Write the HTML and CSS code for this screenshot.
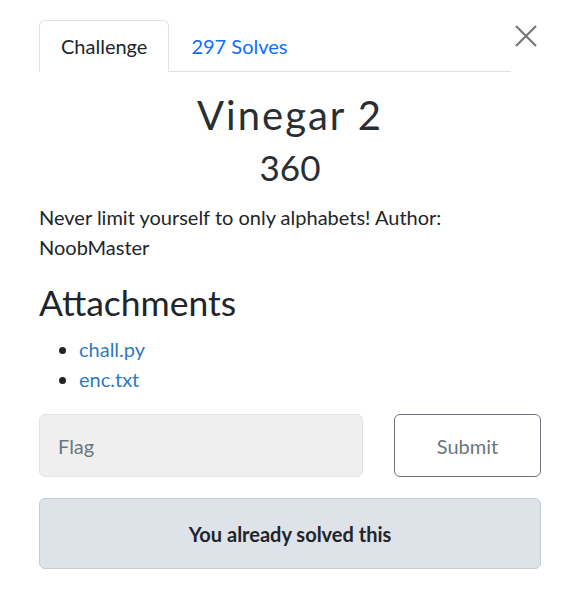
FILE: index.html
```html
<!DOCTYPE html>
<html>
<head>
<meta charset="utf-8">
<link rel="stylesheet" href="styles.css">
</head>
<body>
<div class="modal">
  <div class="header">
    <ul class="tabs">
      <li class="tab active">Challenge</li>
      <li class="tab link">297 Solves</li>
    </ul>
    <button class="close" aria-label="Close">
      <svg width="22" height="22" viewBox="0 0 22 22"><path d="M1 1L21 21M21 1L1 21" stroke="#777" stroke-width="2.2" fill="none"/></svg>
    </button>
  </div>
  <h2 class="title">Vinegar 2</h2>
  <h3 class="value">360</h3>
  <p class="desc">Never limit yourself to only alphabets! Author: NoobMaster</p>
  <h4 class="att">Attachments</h4>
  <ul class="files">
    <li><a href="#">chall.py</a></li>
    <li><a href="#">enc.txt</a></li>
  </ul>
  <div class="form">
    <div class="input">Flag</div>
    <button class="submit">Submit</button>
  </div>
  <div class="alert">You already solved this</div>
</div>
</body>
</html>
```
FILE: styles.css
```css
* { box-sizing: border-box; }
body {
  margin: 0;
  background: #fff;
  font-family: Lato, "Open Sans", sans-serif;
  color: #212529;
}
.modal {
  width: 502px;
  margin-left: 39px;
  padding-top: 20px;
}
.header {
  display: flex;
  align-items: flex-start;
}
.tabs {
  flex: 1;
  display: flex;
  list-style: none;
  margin: 0;
  padding: 0;
  border-bottom: 1px solid #dee2e6;
  height: 52px;
}
.tab {
  padding: 0 21px;
  font-size: 20px;
  line-height: 51px;
  border: 1px solid transparent;
  border-top-left-radius: 6px;
  border-top-right-radius: 6px;
  margin-bottom: -1px;
}
.tab.active {
  border-color: #dee2e6 #dee2e6 #fff;
  background: #fff;
  color: #212529;
}
.tab.link { color: #0d6efd; }
.close {
  border: 0;
  background: none;
  padding: 0;
  margin: 5px 4px 0 4px;
  width: 22px;
  height: 22px;
  display: flex;
}
.title {
  margin: 19px 0 0;
  text-align: center;
  font-size: 40px;
  font-weight: 400;
  letter-spacing: 2px;
  line-height: 48px;
  color: #2a2e33;
}
.value {
  margin: 7px 0 0;
  text-align: center;
  font-size: 35px;
  font-weight: 400;
  line-height: 42px;
  color: #2a2e33;
}
.desc {
  margin: 14px 0 0;
  font-size: 20px;
  line-height: 30px;
}
.att {
  margin: 19px 0 0;
  font-size: 35.5px;
  font-weight: 400;
  line-height: 43px;
}
.files {
  margin: 10px 0 0;
  padding-left: 40px;
  font-size: 20px;
  line-height: 30px;
}
.files a { color: #2f7abf; text-decoration: none; }
.form {
  display: flex;
  gap: 31px;
  margin-top: 20px;
}
.input {
  flex: 1;
  height: 63px;
  background: #efefef;
  border: 1px solid #e3e3e3;
  border-radius: 6px;
  padding: 0 18px;
  display: flex;
  align-items: center;
  font-size: 20px;
  color: #6c757d;
}
.submit {
  width: 147px;
  height: 63px;
  background: #fff;
  border: 1px solid #6c757d;
  border-radius: 6px;
  font-family: inherit;
  font-size: 20px;
  color: #6c757d;
}
.alert {
  margin-top: 21px;
  height: 71px;
  background: #dee2e9;
  border: 1px solid #c6ccd4;
  border-radius: 6px;
  display: flex;
  align-items: center;
  justify-content: center;
  font-size: 20px;
  font-weight: 700;
  color: #212529;
}
```
